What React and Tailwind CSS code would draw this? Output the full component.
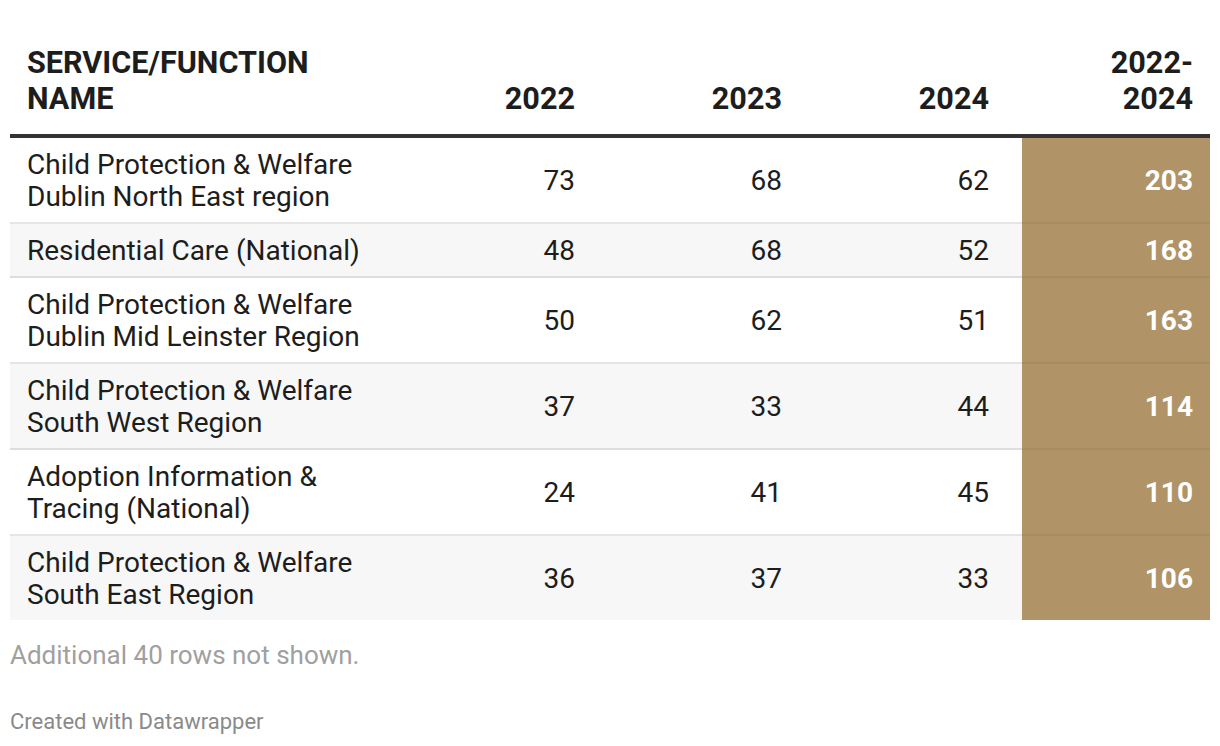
import React from "react";

const rows = [
  { name: ["Child Protection & Welfare", "Dublin North East region"], a: 73, b: 68, c: 62, total: 203 },
  { name: ["Residential Care (National)"], a: 48, b: 68, c: 52, total: 168 },
  { name: ["Child Protection & Welfare", "Dublin Mid Leinster Region"], a: 50, b: 62, c: 51, total: 163 },
  { name: ["Child Protection & Welfare", "South West Region"], a: 37, b: 33, c: 44, total: 114 },
  { name: ["Adoption Information &", "Tracing (National)"], a: 24, b: 41, c: 45, total: 110 },
  { name: ["Child Protection & Welfare", "South East Region"], a: 36, b: 37, c: 33, total: 106 },
];

const cols = "grid grid-cols-[391px_207px_207px_207px_188px]";

const App = () => {
  return (
    <div className="w-[1220px] h-[746px] bg-white px-[10px] pt-[45px] text-[#1d1d1d] font-['Roboto',sans-serif]">
      {/* Header */}
      <div className={`${cols} items-end border-b-4 border-[#333333] pb-[17px] text-[30.6px] leading-[36px] font-bold`}>
        <div className="pl-[17px]">
          SERVICE/FUNCTION
          <br />
          NAME
        </div>
        <div className="text-right pr-[33px]">2022</div>
        <div className="text-right pr-[33px]">2023</div>
        <div className="text-right pr-[33px]">2024</div>
        <div className="text-right pr-[17px]">
          2022-
          <br />
          2024
        </div>
      </div>

      {/* Rows */}
      {rows.map((r, i) => {
        const last = i === rows.length - 1;
        return (
          <div
            key={i}
            className={`${cols} text-[28px] leading-[32px] ${i % 2 ? 'bg-[#f7f7f7]' : 'bg-white'} ${
              last ? '' : 'border-b-2 border-black/10'
            }`}
          >
            <div className="pl-[17px] pt-[11px] pb-[9px]">
              {r.name.map((n, j) => (
                <div key={j}>{n}</div>
              ))}
            </div>
            <div className="flex items-center justify-end pr-[33px] pt-[2px]">{r.a}</div>
            <div className="flex items-center justify-end pr-[33px] pt-[2px]">{r.b}</div>
            <div className="flex items-center justify-end pr-[33px] pt-[2px]">{r.c}</div>
            <div
              className={`flex items-center justify-end pr-[17px] pt-[2px] bg-[#b09467] text-white font-bold ${
                last ? '' : '-mb-[2px] border-b-2 border-black/5'
              }`}
            >
              {r.total}
            </div>
          </div>
        );
      })}

      {/* Notes */}
      <div className="pt-[19px] text-[26px] leading-[32px] text-[#a0a0a0]">Additional 40 rows not shown.</div>
      <div className="pt-[38px] text-[22px] leading-[26px] text-[#8a8a8a]">Created with Datawrapper</div>
    </div>
  );
};

export default App;
